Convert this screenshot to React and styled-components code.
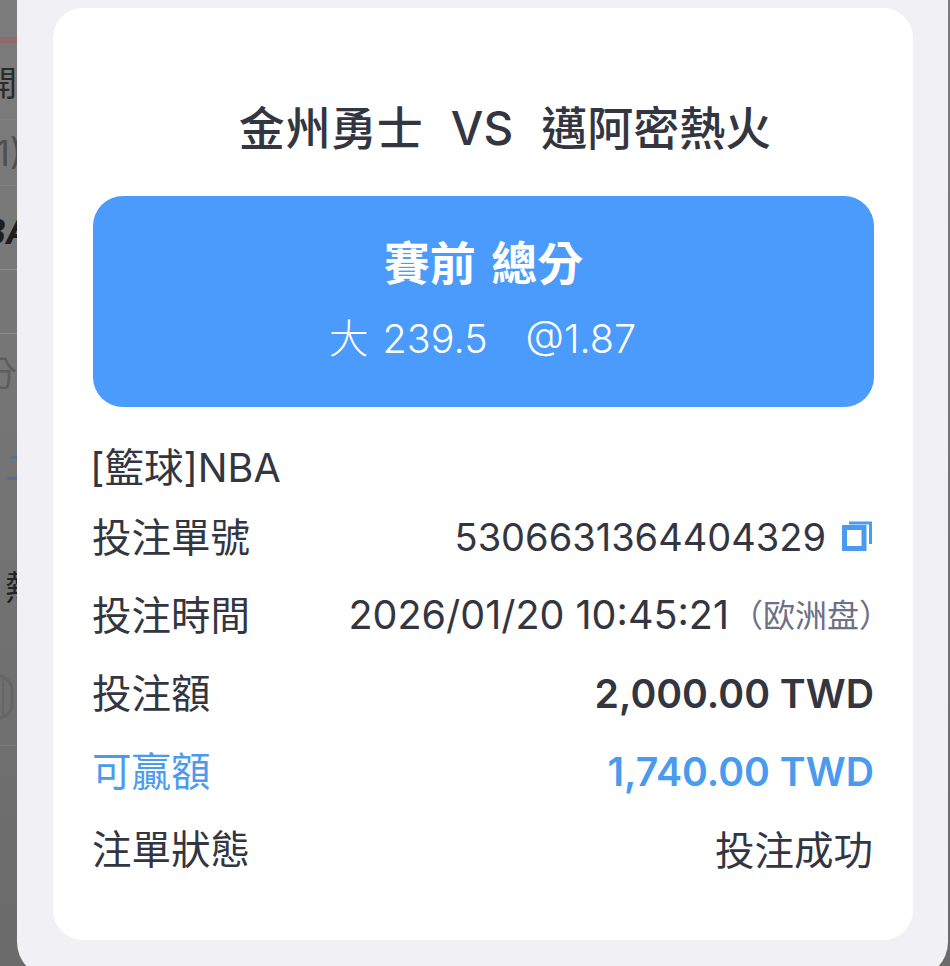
import React from "react";
import styled, { createGlobalStyle } from "styled-components";

const Global = createGlobalStyle`
  html, body { margin: 0; padding: 0; background: #757575; }
  body { font-family: Inter, "Noto Sans CJK TC", sans-serif; }
  * { box-sizing: border-box; }
`;

const Page = styled.div`
  position: relative;
  width: 950px;
  height: 966px;
  overflow: hidden;
  background: linear-gradient(#7c7c7c, #6b6b6b);
`;

const Behind = styled.div`
  width: 17px;
  height: 100%;
  display: flex;
  flex-direction: column;
  overflow: hidden;
`;

const Stripe = styled.div`
  height: ${p => p.$h}px;
  flex: none;
  display: flex;
  align-items: center;
  justify-content: flex-end;
  white-space: nowrap;
  overflow: hidden;
  padding-top: ${p => p.$pad || 0}px;
  font-family: Inter, "Noto Sans CJK TC", sans-serif;
  font-size: ${p => p.$size || 34}px;
  font-weight: ${p => p.$weight || 400};
  font-style: ${p => (p.$italic ? "italic" : "normal")};
  color: ${p => p.$color || "#2a2a2a"};
  border-bottom: ${p => (p.$line ? `1px solid ${p.$line}` : "none")};
  background: ${p => p.$bg || "transparent"};
`;

const StripeText = styled.span`
  flex: none;
  margin-right: ${p => p.$shift || 0}px;
`;

const Ghost = styled.svg`
  display: block;
  flex: none;
`;

const Modal = styled.div`
  position: absolute;
  left: 17px;
  top: -40px;
  width: 931px;
  height: 1018px;
  padding: 48px 35px 26px 36px;
  background: #f1f1f5;
  border-radius: 0 0 36px 36px;
`;

const Card = styled.div`
  width: 860px;
  height: 932px;
  padding: 90px 39px 0 40px;
  background: #ffffff;
  border-radius: 30px;
  color: #333640;
`;

const Title = styled.h1`
  margin: 0 0 38px;
  height: 60px;
  display: flex;
  justify-content: center;
  align-items: center;
  gap: 28px;
  padding-left: 43px;
  font-size: 46px;
  font-weight: 500;
  line-height: 60px;
`;

const Banner = styled.div`
  height: 211px;
  border-radius: 30px;
  background: #4a9bfb;
  color: #fff;
  display: flex;
  flex-direction: column;
  align-items: center;
  padding-top: 37px;
`;

const BannerHead = styled.div`
  font-size: 46px;
  font-weight: 600;
  line-height: 60px;
  word-spacing: 4px;
`;

const BannerOdds = styled.div`
  margin-top: 21px;
  margin-right: 2px;
  display: flex;
  gap: 38px;
  font-size: 39.5px;
  font-weight: 300;
  line-height: 50px;
  word-spacing: 3px;
`;

const League = styled.div`
  margin-top: 36px;
  font-size: 39.5px;
  line-height: 50px;
  height: 50px;
  margin-left: -3px;
`;

const Rows = styled.div`
  margin-top: 3px;
  display: flex;
  flex-direction: column;
`;

const Row = styled.div`
  height: 78px;
  display: flex;
  align-items: center;
  justify-content: space-between;
  font-size: 39.5px;
  color: ${p => (p.$accent ? "#4a9bef" : "#333640")};
`;

const Label = styled.span`
  margin: -2px 0 0 -1px;
`;

const Value = styled.div`
  display: flex;
  align-items: center;
  padding-top: ${p => p.$drop || 0}px;
  font-size: ${p => p.$size || 39.5}px;
  font-weight: ${p => (p.$bold ? 600 : 400)};
  margin-right: ${p => p.$inset || 0}px;
`;

const Note = styled.span`
  font-size: 32px;
  color: #6c7088;
  margin: -5px -17px 0 2px;
`;

const CopyIcon = styled.svg`
  margin: -2px 2px 0 16px;
  display: block;
`;

export default function App() {
  return (
    <>
      <Global />
      <Page>
        <Behind>
          <Stripe $h={37} />
          <Stripe $h={6} $bg="#8f6a6a" />
          <Stripe $h={77} $line="#808080">
            <StripeText>開</StripeText>
          </Stripe>
          <Stripe $h={66} $size={36} $color="#4f4f4f" $line="#808080">
            <StripeText $shift={-6}>1)</StripeText>
          </Stripe>
          <Stripe $h={84} $pad={8} $weight={700} $italic $color="#1d1d1d" $line="#8a8a8a">
            <StripeText $shift={-14}>BA</StripeText>
          </Stripe>
          <Stripe $h={64} $line="#8a8a8a" />
          <Stripe $h={74} $color="#5e5e5e">
            <StripeText>分</StripeText>
          </Stripe>
          <Stripe $h={114} $color="#54708f">
            <StripeText $shift={-22}>二</StripeText>
          </Stripe>
          <Stripe $h={126} $color="#222">
            <StripeText $shift={-22}>熱</StripeText>
          </Stripe>
          <Stripe $h={98} $line="#7b7b7b">
            <Ghost width="17" height="48" viewBox="0 0 17 48">
              <rect x="-18" y="3" width="30" height="42" rx="14" fill="none" stroke="#666" strokeWidth="3" />
              <path d="M3 6v36" stroke="#666" strokeWidth="2" />
            </Ghost>
          </Stripe>
        </Behind>
        <Modal>
          <Card>
            <Title>
              <span>金州勇士</span>
              <span>VS</span>
              <span>邁阿密熱火</span>
            </Title>
            <Banner>
              <BannerHead>賽前 總分</BannerHead>
              <BannerOdds>
                <span>大 239.5</span>
                <span>@1.87</span>
              </BannerOdds>
            </Banner>
            <League>[籃球]NBA</League>
            <Rows>
              <Row>
                <Label>投注單號</Label>
                <Value $size={38} $drop={3}>
                  5306631364404329
                  <CopyIcon width="30" height="30" viewBox="0 0 30 30" fill="none" stroke="#4a9bef">
                    <rect x="2.5" y="6.5" width="19.5" height="21" strokeWidth="5" />
                    <path d="M7 2h21.5v21" strokeWidth="3" />
                  </CopyIcon>
                </Value>
              </Row>
              <Row>
                <Label>投注時間</Label>
                <Value $drop={4}>
                  2026/01/20 10:45:21
                  <Note>（欧洲盘）</Note>
                </Value>
              </Row>
              <Row>
                <Label>投注額</Label>
                <Value $bold $size={39.2} $drop={4}>2,000.00 TWD</Value>
              </Row>
              <Row $accent>
                <Label>可贏額</Label>
                <Value $bold $size={39.2} $drop={4}>1,740.00 TWD</Value>
              </Row>
              <Row>
                <Label>注單狀態</Label>
                <Value $inset={1}>投注成功</Value>
              </Row>
            </Rows>
          </Card>
        </Modal>
      </Page>
    </>
  );
}
